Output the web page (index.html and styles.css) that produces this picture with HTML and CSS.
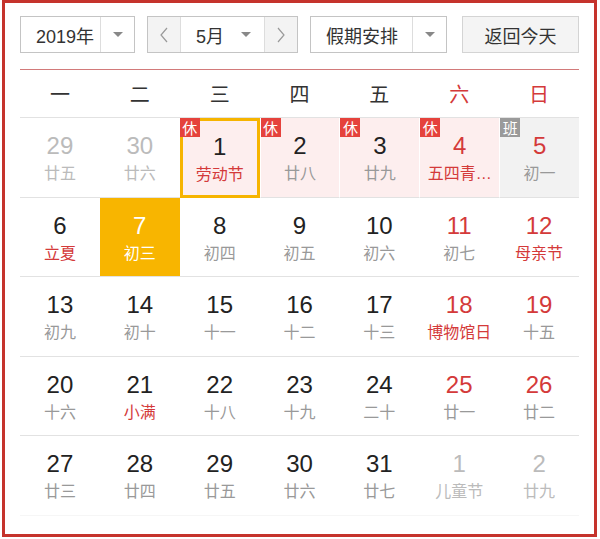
FILE: index.html
```html
<!DOCTYPE html>
<html lang="zh">
<head>
<meta charset="utf-8">
<link rel="stylesheet" href="styles.css">
</head>
<body>
<div class="cal">
  <div class="toolbar">
    <div class="select year">
      <span class="sel-text">2019年</span>
      <span class="sel-arrow"><i class="tri"></i></span>
    </div>
    <div class="month-group">
      <span class="nav"><svg width="10" height="16" viewBox="0 0 10 16"><path d="M8 1 L2 8 L8 15" fill="none" stroke="#999" stroke-width="1.2"/></svg></span>
      <span class="month"><span class="m-text">5月</span><i class="tri"></i></span>
      <span class="nav"><svg width="10" height="16" viewBox="0 0 10 16"><path d="M2 1 L8 8 L2 15" fill="none" stroke="#999" stroke-width="1.2"/></svg></span>
    </div>
    <div class="select holiday">
      <span class="sel-text">假期安排</span>
      <span class="sel-arrow"><i class="tri"></i></span>
    </div>
    <div class="btn">返回今天</div>
  </div>
  <div class="weekdays">
    <span>一</span><span>二</span><span>三</span><span>四</span><span>五</span><span class="red">六</span><span class="red">日</span>
  </div>
  <div class="grid">
    <div class="cell other"><b>29</b><em>廿五</em></div>
    <div class="cell other"><b>30</b><em>廿六</em></div>
    <div class="cell rest today-ring"><span class="badge">休</span><b>1</b><em class="red">劳动节</em></div>
    <div class="cell rest"><span class="badge">休</span><b>2</b><em>廿八</em></div>
    <div class="cell rest"><span class="badge">休</span><b>3</b><em>廿九</em></div>
    <div class="cell rest"><span class="badge">休</span><b class="red">4</b><em class="red">五四青…</em></div>
    <div class="cell work"><span class="badge grey">班</span><b class="red">5</b><em>初一</em></div>

    <div class="cell"><b>6</b><em class="red">立夏</em></div>
    <div class="cell selected"><b>7</b><em>初三</em></div>
    <div class="cell"><b>8</b><em>初四</em></div>
    <div class="cell"><b>9</b><em>初五</em></div>
    <div class="cell"><b>10</b><em>初六</em></div>
    <div class="cell"><b class="red">11</b><em>初七</em></div>
    <div class="cell"><b class="red">12</b><em class="red">母亲节</em></div>

    <div class="cell"><b>13</b><em>初九</em></div>
    <div class="cell"><b>14</b><em>初十</em></div>
    <div class="cell"><b>15</b><em>十一</em></div>
    <div class="cell"><b>16</b><em>十二</em></div>
    <div class="cell"><b>17</b><em>十三</em></div>
    <div class="cell"><b class="red">18</b><em class="red">博物馆日</em></div>
    <div class="cell"><b class="red">19</b><em>十五</em></div>

    <div class="cell"><b>20</b><em>十六</em></div>
    <div class="cell"><b>21</b><em class="red">小满</em></div>
    <div class="cell"><b>22</b><em>十八</em></div>
    <div class="cell"><b>23</b><em>十九</em></div>
    <div class="cell"><b>24</b><em>二十</em></div>
    <div class="cell"><b class="red">25</b><em>廿一</em></div>
    <div class="cell"><b class="red">26</b><em>廿二</em></div>

    <div class="cell"><b>27</b><em>廿三</em></div>
    <div class="cell"><b>28</b><em>廿四</em></div>
    <div class="cell"><b>29</b><em>廿五</em></div>
    <div class="cell"><b>30</b><em>廿六</em></div>
    <div class="cell"><b>31</b><em>廿七</em></div>
    <div class="cell other"><b>1</b><em>儿童节</em></div>
    <div class="cell other"><b>2</b><em>廿九</em></div>
  </div>
</div>
</body>
</html>
```
FILE: styles.css
```css
* { box-sizing: border-box; }
html, body { margin: 0; padding: 0; background: #fff; }
body {
  font-family: "Liberation Sans", "Noto Sans CJK SC", sans-serif;
  color: #222;
}
.cal {
  margin-left: 2px;
  width: 595px;
  height: 537px;
  border: 3px solid #c5332c;
  padding: 13px 15px 0;
}
.toolbar {
  display: flex;
  height: 37px;
  align-items: stretch;
}
.select {
  display: flex;
  border: 1px solid #c4c4c4;
  background: #fff;
  font-size: 18px;
  color: #333;
}
.select .sel-text {
  flex: 1;
  display: flex;
  align-items: center;
  padding-left: 15px;
}
.select .sel-arrow {
  width: 34px;
  border-left: 1px solid #ddd;
  display: flex;
  align-items: center;
  justify-content: center;
}
.tri {
  display: block;
  width: 0;
  height: 0;
  border-left: 5px solid transparent;
  border-right: 5px solid transparent;
  border-top: 5px solid #888;
}
.year { width: 115px; }
.month-group {
  margin-left: 12px;
  width: 151px;
  display: flex;
  border: 1px solid #c4c4c4;
}
.nav {
  width: 32px;
  background: #f3f3f3;
  display: flex;
  align-items: center;
  justify-content: center;
}
.month {
  flex: 1;
  border-left: 1px solid #ddd;
  border-right: 1px solid #ddd;
  display: flex;
  align-items: center;
  font-size: 18px;
  color: #333;
  padding-left: 15px;
}
.month .m-text { flex: 1; }
.month .tri { margin-right: 13px; }
.holiday { margin-left: 12px; width: 137px; }
.btn {
  margin-left: 15px;
  width: 117px;
  border: 1px solid #d4d4d4;
  background: #f4f4f4;
  font-size: 18px;
  color: #333;
  display: flex;
  align-items: center;
  justify-content: center;
}
.weekdays {
  margin-top: 16px;
  border-top: 1px solid #d27a7a;
  display: grid;
  grid-template-columns: repeat(7, 1fr);
  height: 48px;
  align-items: center;
  font-size: 20px;
  color: #333;
  text-align: center;
}
.red { color: #d43a3a; }
.grid {
  display: grid;
  grid-template-columns: repeat(7, 1fr);
  grid-auto-rows: 79.5px;
  border-top: 1px solid #e2e2e2;
}
.cell {
  position: relative;
  display: flex;
  flex-direction: column;
  align-items: center;
  justify-content: center;
  border-bottom: 1px solid #e2e2e2;
  padding-top: 3px;
}
.grid .cell:nth-last-child(-n+7) { border-bottom-color: #f6f6f6; }
.cell b {
  font-weight: normal;
  font-size: 24px;
  line-height: 28px;
  color: #222;
}
.cell em {
  font-style: normal;
  font-size: 16px;
  line-height: 22px;
  margin-top: 3px;
  color: #999;
}
.cell b.red, .cell em.red { color: #d43a3a; }
.cell.other b, .cell.other em { color: #bbb; }
.cell.rest { background: #fdeeee; border-left: 1px solid #fff; }
.cell.work { background: #f2f2f2; border-left: 1px solid #fff; }
.cell.today-ring {
  border: 3px solid #f6b400;
  background: #fdeeee;
}
.cell.selected { background: #f8b500; }
.cell.selected b, .cell.selected em { color: #fff; }
.badge {
  position: absolute;
  left: 0;
  top: 0;
  width: 20px;
  height: 19px;
  background: #e5423c;
  color: #fff;
  font-size: 15px;
  line-height: 19px;
  text-align: center;
  font-family: "Noto Sans CJK SC", sans-serif;
}
.today-ring .badge { left: -3px; top: -3px; }
.badge.grey { background: #9a9a9a; }
```
